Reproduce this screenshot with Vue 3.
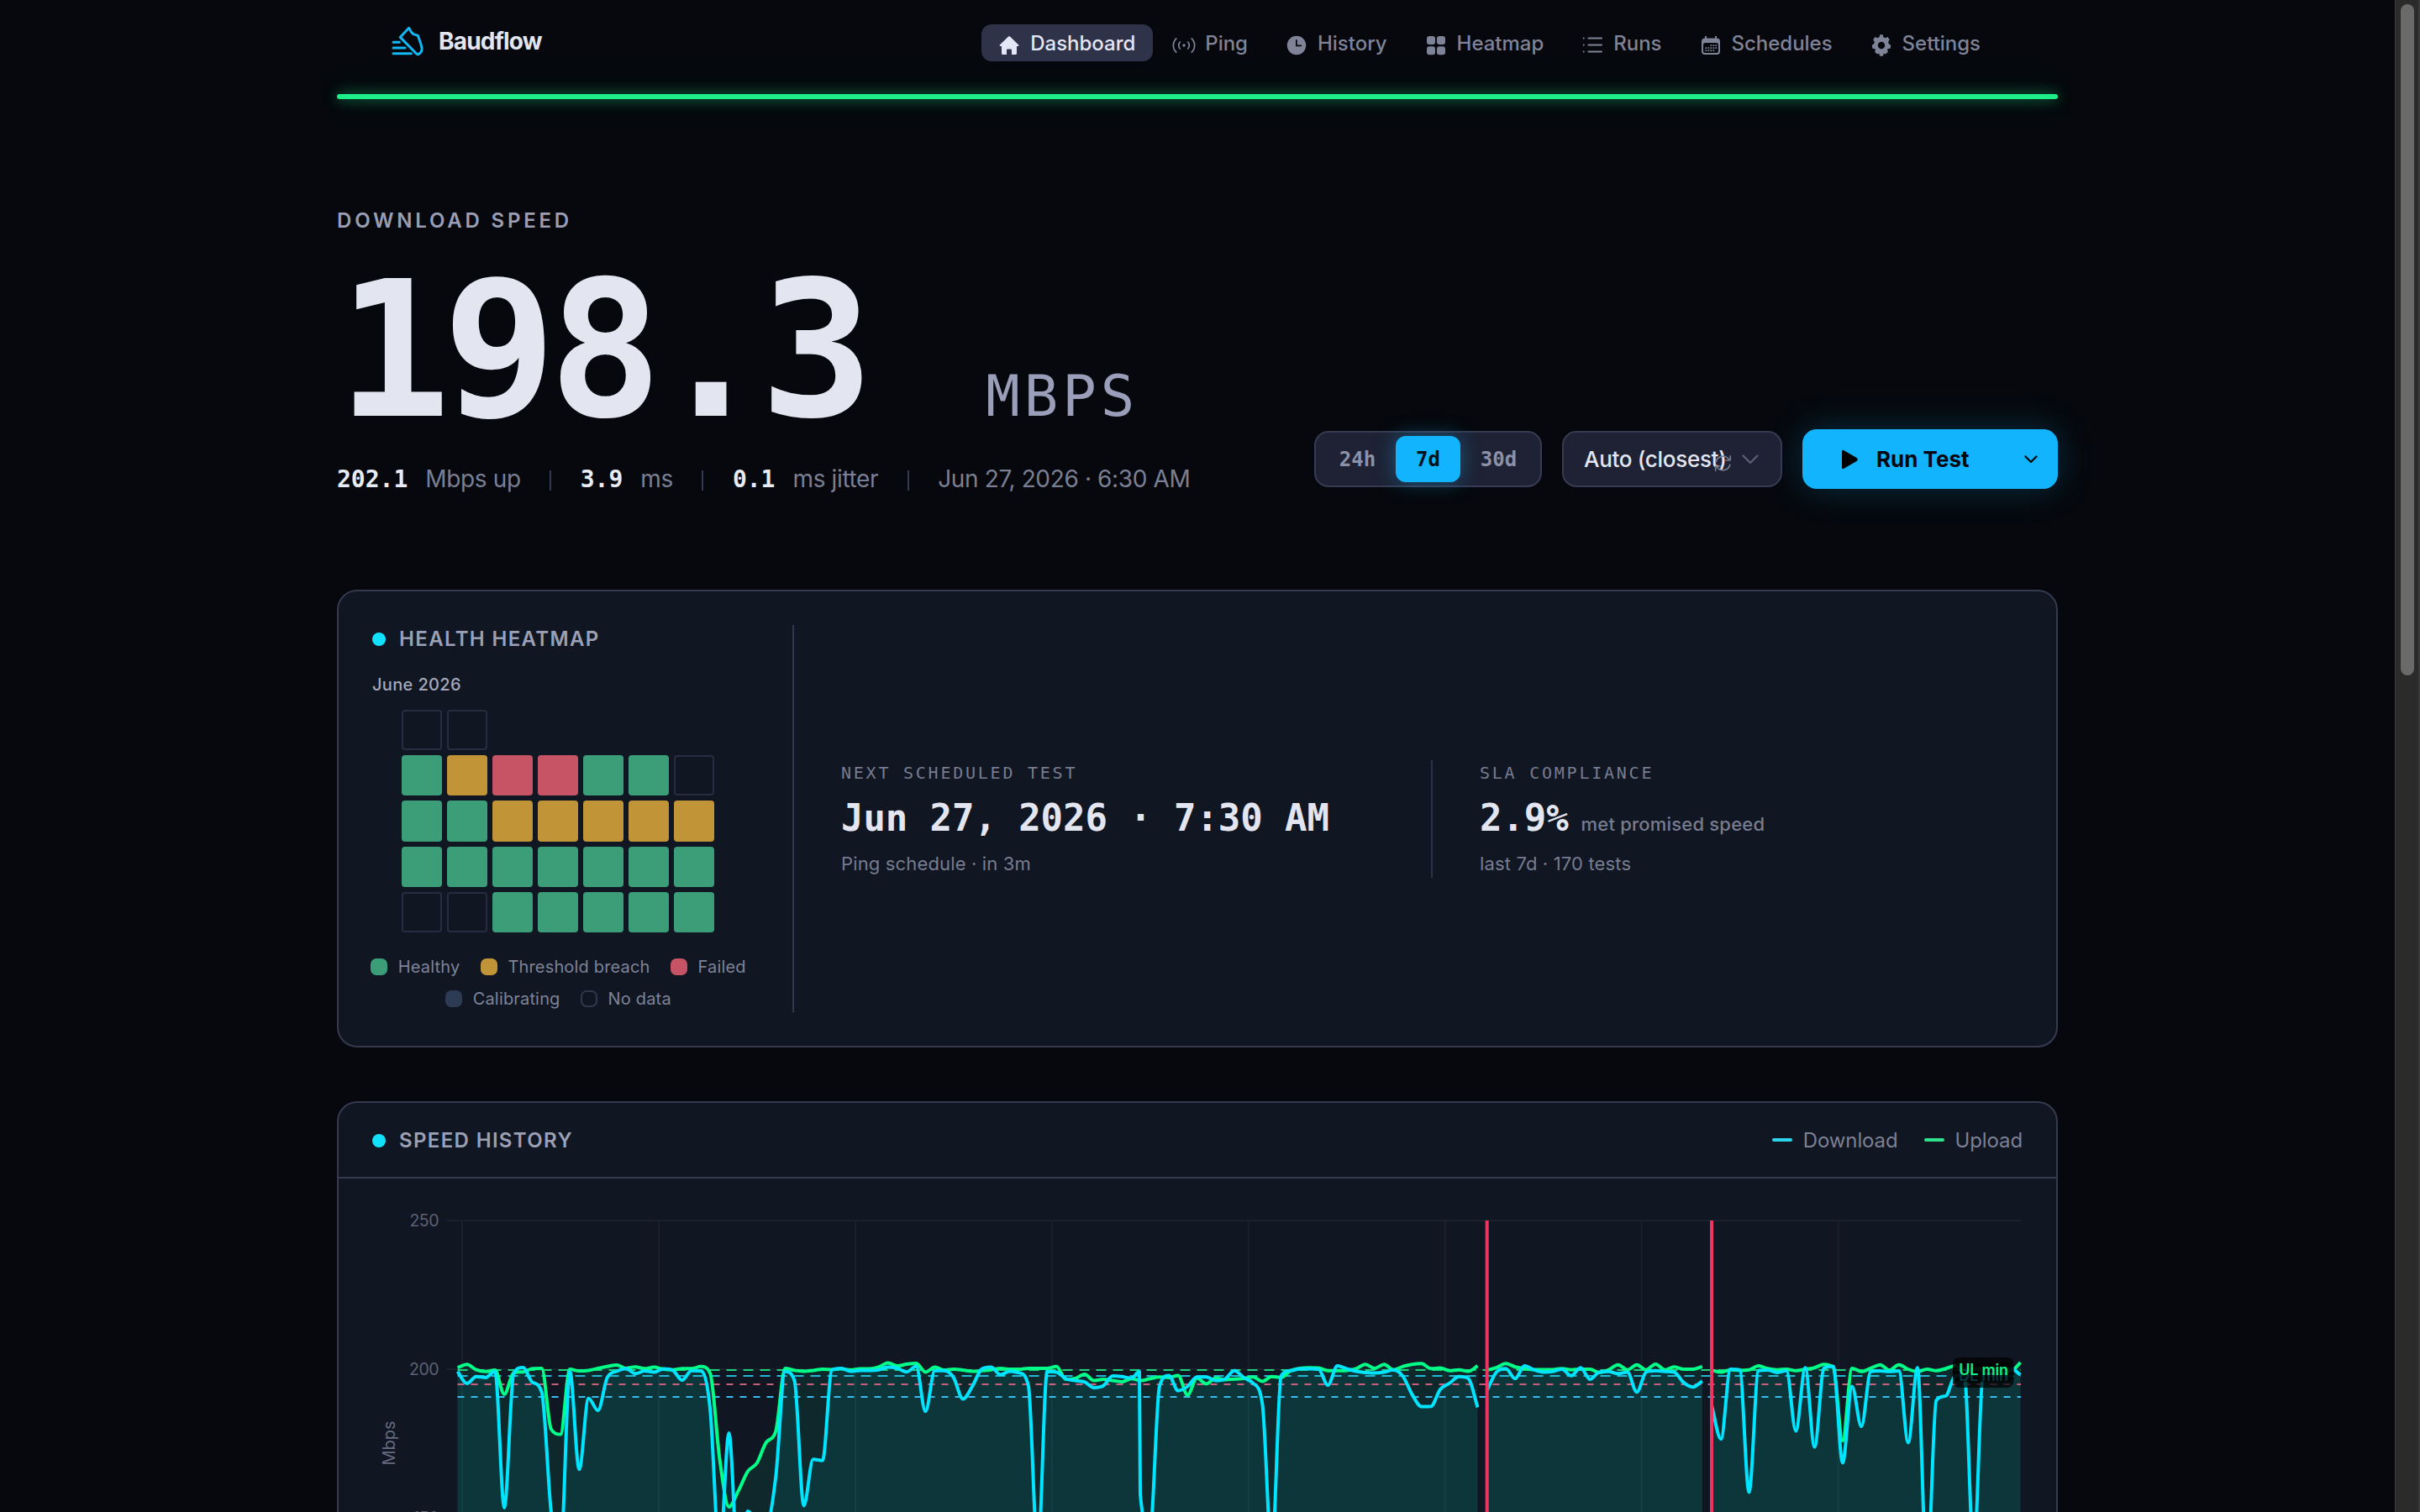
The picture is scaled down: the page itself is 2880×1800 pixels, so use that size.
<script setup>
import { computed } from 'vue'

// Main menu
const menu = [
  { icon: 'home', text: 'Dashboard', active: true },
  { icon: 'ping', text: 'Ping' },
  { icon: 'clock', text: 'History' },
  { icon: 'grid', text: 'Heatmap' },
  { icon: 'list', text: 'Runs' },
  { icon: 'calendar', text: 'Schedules' },
  { icon: 'gear', text: 'Settings' },
]

const ranges = ['24h', '7d', '30d']
const activeRange = '7d'

// Heatmap: n - no data, g - healthy, a - breach, r - failed
const weeks = ['nn', 'garrggn', 'ggaaaaa', 'ggggggg', 'nnggggg']
const legend = [
  [
    { cls: 'g', text: 'Healthy' },
    { cls: 'a', text: 'Threshold breach' },
    { cls: 'r', text: 'Failed' },
  ],
  [
    { cls: 'c', text: 'Calibrating' },
    { cls: 'n', text: 'No data' },
  ],
]

// Speed per hour, split where a test failed. A pair is [hour, Mbps]
const download = [
  {
    start: 0,
    values: [
      199.2, 195.2, 197.5, 197.2, 199.3, 153.4, 198.6, 200.6, 195.6, 192.3, 152, 138, 199.2, 166.3, 190.2, 186.1,
      197.2, 199.3, 200.2, 198.5, 199.4, 199, 200.1, 199.6, 196.3, 199.5, 199.4, 186.3, 137.6, 178.5, 133.5, 152.3,
      149, 148, 163.7, 199.2, 196.2, 154.1, 169.7, 169.3, 199.8, 200.3, 199.3, 199.6, 199.6, 199.8, 200.7, 200.3,
      199.1, 201, 185.8, 199.5, 199.5, 197.2, 190, 194.2, 200, 200.7, 198.2, 199.3, 198.8, 194.4, 138, 199.2, 199,
      196.8, 196.2, 195.7, 193.8, 194.4, 197.7, 197.5, 197, [72.86, 199.2], [72.95, 158], [74, 146], 194.2, 197.9,
      192.8, 194.2, 197.4, 197.4, 196.2, 196.7, 199.5, 197.2, 195.3, 188.2, 138, 197.7, 199.5, 200.1, 200.1, 200,
      194.6, 201.1, 200.2, 199.3, 198.9, 198.7, 199, 199.8, 197.7, 191.5, 187.4, 187.5, 193.2, 195.3, 197.5, 196.9,
      187.2,
    ],
  },
  {
    start: 110,
    values: [
      192.9, 199, 200.2, 196.8, 201.1, 199.8, 199, 199.2, 200, 197.8, 200.5, 196.6, 199, 199.2, 198.5, 199, 192.3,
      199, 199.5, 199.2, 199, 195.5, 194, 196,
    ],
  },
  {
    start: 134,
    values: [
      187.8, 176.5, 200, 199.8, 158.6, 199.5, 199.7, 198.9, 199.5, 179.2, 200.5, 173.8, 200.3, 201, 168.5, 194.2,
      180.7, 199.2, 199.4, 199.2, 199.4, 175.3, 200.5, 130, 189.5, 191, 197.7, 198, 138, 198.6, 200, 199.5, 200.2,
      198.1,
    ],
  },
]

const upload = [
  {
    start: 0,
    values: [
      200.5, 201.6, 199.8, 199.2, 199.7, 191.6, 198.8, 199.1, 200.2, 200.3, 179.8, 178.1, 200, 199.4, 199.6, 200.3,
      200.9, 201.4, 200.3, 200.8, 200.2, 200.7, 200, 199.8, 200.2, 200.2, 200.9, 198.6, 169.9, 153.7, 159, 165.6,
      168.5, 175.5, 179.1, 200.3, 199.6, 199.3, 199.6, 200, 199.9, 200.1, 199.8, 200.1, 200.1, 200.7, 202.1, 201.1,
      201.7, 202, 199, 200.7, 199.7, 200, 199.7, 199.3, 199.5, 199.8, 200.3, 200, 200, 200.3, 200.3, 200.3, 200.9,
      196.6, 196.9, 198.3, 196.2, 196.6, 196.2, 195.8, 196.8, 196.2, 196.8, 197.4, 197.2, 197.9, 191.3, 197, 195.1,
      197, 196.5, 196.7, 196.9, 197.4, 195.9, 197.5, 197.2, 199.5, 200.3, 200.5, 200.4, 199.5, 199.5, 199.6, 200.2,
      201.6, 200.3, 201.6, 199.8, 200.9, 201.6, 201.9, 200.2, 200.4, 199.5, 199.8, 199.3, 201.1,
    ],
  },
  {
    start: 110,
    values: [
      199.7, 200.5, 201.9, 200.8, 200.2, 199.9, 199.9, 199.9, 200.2, 199.8, 200, 200, 198.9, 199.8, 201.5, 199.8,
      201.5, 199.8, 201.7, 199.8, 200.8, 200, 200, 200.9,
    ],
  },
  {
    start: 134,
    values: [
      199.7, 199, 199.8, 199.6, 199.8, 201.1, 200.2, 199.8, 200, 199.5, 200, 200.5, 201.6, 200.5, 176, 200.3, 199.2,
      200.3, 201.5, 199.7, 201.5, 200, 199.2, 200, 199.5, 200.2, 201.1, 200, 200, 200, 200, 200, 199.5, 202.3,
    ],
  },
]

const CHART_W = 2044
const CHART_H = 397
const LEFT = 141.5
const RIGHT = 2002
const STEP = 11.138

const xOf = (h) => LEFT + h * STEP
const yOf = (v) => 227 + (200 - v) * 3.54

const gridX = [0, 1, 2, 3, 4, 5, 6, 7].map((n) => 147 + n * 233.95)
const gridY = [250, 200, 150]
const failures = [110, 134]

function toPoints(part) {
  let hour = part.start - 1
  return part.values.map((e) => {
    if (Array.isArray(e)) {
      hour = e[0]
      return { x: xOf(e[0]), y: yOf(e[1]) }
    }
    hour = Math.floor(hour) + 1
    return { x: xOf(hour), y: yOf(e) }
  })
}

// Monotone cubic curve through the points
function curve(points) {
  const n = points.length
  const slopes = []
  for (let i = 0; i < n - 1; i++) {
    slopes.push((points[i + 1].y - points[i].y) / (points[i + 1].x - points[i].x))
  }
  const t = points.map((_, i) => {
    if (i === 0) return slopes[0]
    if (i === n - 1) return slopes[n - 2]
    return slopes[i - 1] * slopes[i] <= 0 ? 0 : (slopes[i - 1] + slopes[i]) / 2
  })
  for (let i = 0; i < n - 1; i++) {
    if (slopes[i] === 0) {
      t[i] = t[i + 1] = 0
      continue
    }
    const a = t[i] / slopes[i]
    const b = t[i + 1] / slopes[i]
    const len = a * a + b * b
    if (len > 9) {
      t[i] = (3 * a * slopes[i]) / Math.sqrt(len)
      t[i + 1] = (3 * b * slopes[i]) / Math.sqrt(len)
    }
  }
  let d = `M${points[0].x.toFixed(1)} ${points[0].y.toFixed(1)}`
  for (let i = 0; i < n - 1; i++) {
    const p = points[i]
    const q = points[i + 1]
    const s = (q.x - p.x) / 3
    d += `C${[p.x + s, p.y + t[i] * s, q.x - s, q.y - t[i + 1] * s, q.x, q.y].map((v) => v.toFixed(1)).join(' ')}`
  }
  return d
}

function build(series) {
  return series.map((part) => {
    const points = toPoints(part)
    const line = curve(points)
    const first = points[0].x.toFixed(1)
    const last = points[points.length - 1].x.toFixed(1)
    return { line, area: `${line}L${last} 600L${first} 600Z` }
  })
}

const downloadPaths = computed(() => build(download))
const uploadPaths = computed(() => build(upload))
</script>

<template>
  <div class="screen">
    <div class="page">
      <header class="nav">
        <div class="brand">
          <svg class="brand-logo" viewBox="30 30 114 108" fill="none" stroke="#12b8f5" stroke-width="9"
            stroke-linecap="round" stroke-linejoin="round">
            <path d="M92 37L61 70L119 129Q124 133 129 129L135 123Q139 118 138 108L134 92L124 64L108 59L100 51Z" />
            <path d="M36 88H58M36 108H78M36 128H100" />
          </svg>
          <span>Baudflow</span>
        </div>
        <nav class="menu">
          <a v-for="m in menu" :key="m.text" class="menu-item" :class="{ active: m.active }">
            <svg class="menu-icon" viewBox="0 0 24 24" fill="currentColor">
              <template v-if="m.icon === 'home'">
                <path d="M11 1.6a1.5 1.5 0 0 1 2 0l10 9.6a1.1 1.1 0 0 1-.8 1.9H21v8.4a1.5 1.5 0 0 1-1.5 1.5H15v-5.5a1 1 0 0 0-1-1h-4a1 1 0 0 0-1 1V23H4.5A1.5 1.5 0 0 1 3 21.5v-8.4H1.8a1.1 1.1 0 0 1-.8-1.9z" />
              </template>
              <g v-else-if="m.icon === 'ping'" fill="none" stroke="currentColor" stroke-width="1.7" stroke-linecap="round">
                <path d="M2.8 3.8a11.5 11.5 0 0 0 0 16.4M21.2 3.8a11.5 11.5 0 0 1 0 16.4M7.3 8a5.8 5.8 0 0 0 0 8M16.7 8a5.8 5.8 0 0 1 0 8" />
                <circle cx="12" cy="12" r=".8" fill="currentColor" />
              </g>
              <path v-else-if="m.icon === 'clock'" fill-rule="evenodd"
                d="M12 .8a11.2 11.2 0 1 0 0 22.4a11.2 11.2 0 0 0 0-22.4zM11 5.2h1.8v6.3H18v1.8H11z" />
              <g v-else-if="m.icon === 'grid'">
                <rect x="1" y="1" width="10" height="10" rx="3" />
                <rect x="13" y="1" width="10" height="10" rx="3" />
                <rect x="1" y="13.2" width="10" height="10" rx="3" />
                <rect x="13" y="13.2" width="10" height="10" rx="3" />
              </g>
              <g v-else-if="m.icon === 'list'" fill="none" stroke="currentColor" stroke-width="2" stroke-linecap="round">
                <path d="M7.5 3.500H23M7.5 11.500H23M7.5 19.500H23M1.700 3.500h.1M1.700 11.500h.1M1.700 19.500h.1" />
              </g>
              <g v-else-if="m.icon === 'calendar'">
                <path fill-rule="evenodd"
                  d="M5 1h2v2.500h10V1h2v2.500a4 4 0 0 1 4 4V19a4 4 0 0 1-4 4H5a4 4 0 0 1-4-4V7.500a4 4 0 0 1 4-4zM5.500 9A2.500 2.500 0 0 0 3 11.500v7A2.500 2.500 0 0 0 5.500 21h13a2.500 2.500 0 0 0 2.500-2.500v-7A2.500 2.500 0 0 0 18.500 9z" />
                <path d="M11.500 11.200h1.700v1.700h-1.700zM14.500 11.200h1.700v1.700h-1.700zM17.400 11.200h1.700v1.700h-1.700zM5.500 14.200h1.700v1.700H5.500zM8.500 14.200h1.700v1.700H8.500zM11.500 14.200h1.700v1.700h-1.700zM14.500 14.200h1.700v1.700h-1.700zM17.400 14.200h1.700v1.700h-1.700zM5.500 17.200h1.700v1.700H5.500zM8.500 17.200h1.700v1.700H8.500zM11.500 17.200h1.700v1.700h-1.700zM14.500 17.200h1.700v1.700h-1.700z" />
              </g>
              <path v-else fill-rule="evenodd"
                d="M10.200-.8h3.600l.6 3 2.200 1.100 3-1.200 2.200 3.200-1.600 2.500.5 2.300 2.600 1.900-.8 3.700-3 .5-.4.8.7 3-3 2.400-1.800-1-1.200 3.300h-3.600L9 21.400l-1.800 1-3-2.400.7-3-.4-.8-3-.5-.8-3.700 2.600-1.900.5-2.300L2.200 5.300l2.200-3.200 3 1.200 2.200-1.100zM12 7.800a4.200 4.200 0 1 0 0 8.400a4.200 4.200 0 0 0 0-8.400z" />
            </svg>
            <span>{{ m.text }}</span>
          </a>
        </nav>
      </header>
      <div class="status-line"></div>

      <section class="hero">
        <div class="hero-main">
          <div class="hero-label">DOWNLOAD SPEED</div>
          <div class="hero-value">
            <span class="hero-number">198.3</span>
            <span class="hero-unit">MBPS</span>
          </div>
          <div class="stats">
            <b>202.1</b><span>Mbps up</span><i></i>
            <b>3.9</b><span>ms</span><i></i>
            <b>0.1</b><span>ms jitter</span><i></i>
            <span>Jun 27, 2026 · 6:30 AM</span>
          </div>
        </div>

        <div class="controls">
          <div class="segment">
            <button v-for="r in ranges" :key="r" :class="{ active: r === activeRange }">{{ r }}</button>
          </div>
          <div class="select">
            <span>Auto (closest)</span>
            <svg class="select-refresh" viewBox="0 0 24 24" fill="none" stroke="currentColor" stroke-width="1.9"
              stroke-linecap="round" stroke-linejoin="round">
              <path d="M2.5 10A9.8 9.8 0 0 1 20.5 7.5M22 2v6h-6M21.5 14A9.8 9.8 0 0 1 3.5 16.5M2 22v-6h6" />
            </svg>
            <svg class="select-arrow" viewBox="0 0 20 12" fill="none" stroke="currentColor" stroke-width="2.2"
              stroke-linecap="round" stroke-linejoin="round">
              <path d="M1.5 1.5L10 10L18.5 1.5" />
            </svg>
          </div>
          <div class="run">
            <svg class="run-play" viewBox="0 0 20 24">
              <path d="M0 2Q0-.8 2.6.6L18.5 10Q21 12 18.5 14L2.6 23.4Q0 24.8 0 22z" />
            </svg>
            <span>Run Test</span>
            <svg class="run-arrow" viewBox="0 0 16 10" fill="none" stroke="#04070d" stroke-width="2.3"
              stroke-linecap="round" stroke-linejoin="round">
              <path d="M1.5 1.5L8 8L14.5 1.5" />
            </svg>
          </div>
        </div>
      </section>

      <section class="card overview">
        <div class="health">
          <h2 class="title">HEALTH HEATMAP</h2>
          <div class="month">June 2026</div>
          <div class="calendar">
            <div v-for="(w, i) in weeks" :key="i" class="week">
              <div v-for="(d, j) in w" :key="j" class="day" :class="d"></div>
            </div>
          </div>
          <div v-for="(row, i) in legend" :key="i" class="legend">
            <div v-for="l in row" :key="l.text" class="legend-item">
              <span class="swatch" :class="l.cls"></span>{{ l.text }}
            </div>
          </div>
        </div>
        <div class="info">
          <div class="info-block next">
            <div class="info-label">NEXT SCHEDULED TEST</div>
            <div class="info-value">Jun 27, 2026 · 7:30 AM</div>
            <div class="info-note">Ping schedule · in 3m</div>
          </div>
          <div class="info-block sla">
            <div class="info-label">SLA COMPLIANCE</div>
            <div class="info-value">2.9%<small>met promised speed</small></div>
            <div class="info-note">last 7d · 170 tests</div>
          </div>
        </div>
      </section>

      <section class="card history">
        <div class="history-head">
          <h2 class="title">SPEED HISTORY</h2>
          <div class="series">
            <div class="series-item"><span class="dash dl"></span>Download</div>
            <div class="series-item"><span class="dash ul"></span>Upload</div>
          </div>
        </div>
        <svg class="chart" :width="CHART_W" :height="CHART_H" :viewBox="`0 0 ${CHART_W} ${CHART_H}`">
          <g class="grid-lines">
            <line v-for="x in gridX" :key="x" :x1="x" :x2="x" y1="50" :y2="CHART_H" />
            <line v-for="v in gridY" :key="v" x1="128" :x2="RIGHT" :y1="yOf(v)" :y2="yOf(v)" />
          </g>
          <g class="axis">
            <text v-for="v in gridY" :key="v" x="119" :y="yOf(v) + 6.5" text-anchor="end">{{ v }}</text>
            <text class="axis-name" transform="translate(66.5 315) rotate(-90)" text-anchor="middle">Mbps</text>
          </g>

          <path v-for="(p, i) in uploadPaths" :key="'ua' + i" :d="p.area" class="area-ul" />
          <path v-for="(p, i) in downloadPaths" :key="'da' + i" :d="p.area" class="area-dl" />

          <g class="limits">
            <line :x1="LEFT" :x2="RIGHT" y1="228" y2="228" stroke="#1fd07a" stroke-dasharray="12 8" />
            <line :x1="LEFT" :x2="RIGHT" y1="235" y2="235" stroke="#22b8d4" stroke-dasharray="12 8" />
            <line :x1="LEFT" :x2="RIGHT" y1="245" y2="245" stroke="#c9607f" stroke-dasharray="8 8" />
            <line :x1="LEFT" :x2="RIGHT" y1="260" y2="260" stroke="#38bdf0" stroke-dasharray="8 8" />
          </g>

          <path v-for="(p, i) in uploadPaths" :key="'ul' + i" :d="p.line" class="line-ul" />
          <path v-for="(p, i) in downloadPaths" :key="'dl' + i" :d="p.line" class="line-dl" />

          <line v-for="h in failures" :key="h" :x1="xOf(h)" :x2="xOf(h)" y1="50" :y2="CHART_H" class="failure" />

          <g class="tags">
            <rect x="1921" y="220" width="72.5" height="29" rx="8" />
            <text x="1957.5" y="240.5" text-anchor="middle" fill="#1fb4cc">DL min</text>
            <rect x="1921" y="213" width="72.5" height="29" rx="8" />
            <text x="1957.5" y="233.5" text-anchor="middle" fill="#12ef83">UL min</text>
          </g>
        </svg>
      </section>
    </div>
    <div class="scrollbar"><div class="thumb"></div></div>
  </div>
</template>

<style>
html,
body {
  margin: 0;
  background: #06080d;
  overflow: hidden;
}
</style>

<style scoped>
.screen {
  display: flex;
  width: 2880px;
  height: 1800px;
  overflow: hidden;
  background: #06080d;
  color: #e3e6f0;
  font-family: Inter, "Liberation Sans", sans-serif;
}

.page {
  width: 2048px;
  padding: 0 401px;
}

/* Navigation */
.nav {
  display: flex;
  justify-content: space-between;
  height: 112px;
  padding: 0 71px 0 65px;
}

.brand {
  display: flex;
  align-items: center;
  gap: 18px;
  height: 97px;
  font-size: 28px;
  font-weight: 700;
  letter-spacing: -0.8px;
}

.brand-logo {
  width: 38px;
  height: 36px;
}

.menu {
  display: flex;
  gap: 4px;
  margin-top: 29px;
}

.menu-item {
  display: flex;
  align-items: center;
  gap: 13px;
  height: 44px;
  padding: 0 21px;
  border-radius: 12px;
  font-size: 24px;
  font-weight: 500;
  letter-spacing: -0.02px;
  color: #7f8397;
}

.menu-item span {
  margin-top: 1px;
}

.menu-item.active {
  background: #2e3349;
  color: #e3e6f5;
}

.menu-icon {
  width: 24px;
  height: 24px;
  margin-top: 6px;
  overflow: visible;
}

.status-line {
  height: 6px;
  border-radius: 3px;
  background: #1df08a;
  box-shadow: 0 0 16px rgba(29, 240, 138, 0.6), 0 0 44px rgba(29, 240, 138, 0.16);
}

/* Hero */
.hero {
  display: flex;
  justify-content: space-between;
  align-items: flex-end;
  height: 471px;
}

.hero-label {
  font-size: 24px;
  line-height: 30px;
  font-weight: 600;
  letter-spacing: 3.8px;
  color: #9a9eb5;
}

.hero-value {
  display: flex;
  align-items: baseline;
  height: 224px;
  margin-top: 27px;
  font-family: "DejaVu Sans Mono", "Liberation Mono", monospace;
}

.hero-number {
  font-size: 225px;
  line-height: 224px;
  font-weight: 700;
  letter-spacing: -9.6px;
}

.hero-unit {
  margin-left: 143px;
  font-size: 67.2px;
  line-height: 68px;
  letter-spacing: 5px;
  color: #9a9eb8;
}

.stats {
  display: flex;
  align-items: baseline;
  margin-top: 21px;
  height: 39px;
  font-size: 28px;
  line-height: 40px;
  letter-spacing: -0.36px;
  color: #7b7f93;
}

.stats b {
  margin-right: 21px;
  font-family: "DejaVu Sans Mono", "Liberation Mono", monospace;
  font-weight: 700;
  letter-spacing: 0;
  color: #e8ebf3;
}

.stats i {
  align-self: center;
  width: 2px;
  height: 24px;
  margin: 4px 34.5px 0;
  background: #343950;
}

.controls {
  display: flex;
  align-items: center;
  gap: 24px;
  margin-bottom: 7px;
}

.segment {
  display: flex;
  box-sizing: border-box;
  width: 271px;
  height: 67px;
  padding: 4px;
  border: 2px solid #363b52;
  border-radius: 17px;
  background: #1e2234;
}

.segment button {
  flex: 1;
  padding: 0;
  border: 0;
  border-radius: 12px;
  background: none;
  color: #8d91a8;
  font-family: "DejaVu Sans Mono", "Liberation Mono", monospace;
  font-size: 24px;
  font-weight: 700;
}

.segment button.active {
  flex: 0 0 77px;
  background: #12b4fd;
  color: #05101a;
  box-shadow: 0 0 24px rgba(18, 180, 253, 0.35);
}

.select {
  position: relative;
  display: flex;
  align-items: center;
  box-sizing: border-box;
  width: 262px;
  height: 67px;
  padding: 0 24px;
  border: 2px solid #363b52;
  border-radius: 17px;
  background: #1e2234;
  font-size: 26px;
  font-weight: 500;
  letter-spacing: -0.3px;
  white-space: nowrap;
}

.select-refresh {
  position: absolute;
  left: 179px;
  top: 26px;
  width: 21px;
  height: 21px;
  color: #767b90;
}

.select-arrow {
  position: absolute;
  right: 26px;
  top: 26px;
  width: 20px;
  height: 12px;
  color: #5b6076;
}

.run {
  display: flex;
  align-items: center;
  box-sizing: border-box;
  width: 304px;
  height: 71px;
  padding: 0 24px 0 47px;
  border-radius: 17px;
  background: #12b4fd;
  color: #04070d;
  font-size: 26px;
  font-weight: 700;
  box-shadow: 0 0 40px rgba(18, 180, 253, 0.22);
}

.run-play {
  width: 19px;
  height: 24px;
  margin-right: 22px;
}

.run-arrow {
  width: 16px;
  height: 10px;
  margin-left: auto;
}

/* Cards */
.card {
  box-sizing: border-box;
  border: 2px solid #353a4f;
  border-radius: 24px;
  background: #111623;
}

.title {
  display: flex;
  align-items: center;
  gap: 16px;
  margin: 0;
  font-size: 24px;
  line-height: 32px;
  font-weight: 600;
  letter-spacing: 1.35px;
  color: #9ba0b5;
}

.title::before {
  content: "";
  width: 16px;
  height: 16px;
  border-radius: 50%;
  background: #12e1fb;
}

.overview {
  display: flex;
  margin-top: 113px;
  height: 545px;
  padding: 40px;
}

.overview .title {
  margin-top: 1px;
}

.health {
  width: 443px;
  padding-right: 57px;
  border-right: 2px solid #31364a;
}

.month {
  margin-top: 25px;
  font-size: 20px;
  line-height: 26px;
  font-weight: 500;
  letter-spacing: 0.35px;
  color: #a3a8ba;
}

.calendar {
  display: grid;
  gap: 6px;
  margin: 17px 0 0 35px;
}

.week {
  display: flex;
  gap: 6px;
}

.day {
  box-sizing: border-box;
  width: 48px;
  height: 48.2px;
  border-radius: 4px;
}

.day.n {
  border: 2px solid #282c42;
}

.g {
  background: #3b9e79;
}

.a {
  background: #c19437;
}

.r {
  background: #c75464;
}

.swatch.c {
  background: #2c3a54;
}

.swatch.n {
  border: 2px solid #31364a;
}

.legend {
  display: flex;
  justify-content: center;
  gap: 24.5px;
  margin-top: 12px;
  font-size: 20px;
  line-height: 26px;
  letter-spacing: 0.17px;
  color: #7e8397;
}

.calendar + .legend {
  margin-top: 28px;
}

.legend-item {
  display: flex;
  align-items: center;
  gap: 12.5px;
  white-space: nowrap;
}

.swatch {
  box-sizing: border-box;
  width: 20px;
  height: 20px;
  border-radius: 7px;
}

.info {
  flex: 1;
  display: flex;
  align-items: center;
}

.info-block {
  height: 140px;
}

.next {
  width: 702px;
  padding-left: 56px;
  border-right: 2px solid #2b3044;
}

.sla {
  padding-left: 56px;
}

.info-label {
  margin-top: 2px;
  font-family: "DejaVu Sans Mono", "Liberation Mono", monospace;
  font-size: 20px;
  line-height: 26px;
  letter-spacing: 2.76px;
  color: #777c8f;
}

.info-value {
  height: 54px;
  margin-top: 14px;
  font-family: "DejaVu Sans Mono", "Liberation Mono", monospace;
  font-size: 44px;
  line-height: 54px;
  font-weight: 700;
  letter-spacing: -0.09px;
}

.info-value small {
  margin-left: 15px;
  font-family: Inter, "Liberation Sans", sans-serif;
  font-size: 22px;
  line-height: 22px;
  font-weight: 500;
  letter-spacing: 0.2px;
  color: #777c8f;
}

.info-note {
  margin-top: 13px;
  font-size: 22px;
  line-height: 28px;
  letter-spacing: 0.15px;
  color: #777c8f;
}

/* Speed history */
.history {
  margin-top: 64px;
  height: 520px;
  overflow: hidden;
}

.history-head {
  display: flex;
  justify-content: space-between;
  align-items: center;
  height: 88px;
  padding: 0 40px;
  border-bottom: 2px solid #353a4f;
}

.history-head .title {
  padding-top: 1px;
}

.series {
  display: flex;
  gap: 31px;
  font-size: 24px;
  letter-spacing: -0.12px;
  color: #7b8094;
}

.series-item {
  display: flex;
  align-items: center;
  gap: 13px;
}

.dash {
  width: 24px;
  height: 4px;
  border-radius: 2px;
}

.dash.dl {
  background: #2bd4ec;
}

.dash.ul {
  background: #2fe08c;
}

.chart {
  display: block;
}

.grid-lines line {
  stroke: #1b202d;
  stroke-width: 2;
}

.axis text {
  fill: #5d6275;
  font-size: 19.5px;
  letter-spacing: -0.5px;
}

.axis .axis-name {
  fill: #666b7f;
  font-size: 20px;
  letter-spacing: 0;
}

.area-ul {
  fill: rgba(0, 255, 136, 0.08);
}

.area-dl {
  fill: rgba(0, 229, 255, 0.08);
}

.limits line {
  stroke-width: 2;
}

.line-ul,
.line-dl {
  fill: none;
  stroke-width: 4;
  stroke-linejoin: round;
}

.line-ul {
  stroke: #00ff88;
}

.line-dl {
  stroke: #00e5ff;
}

.failure {
  stroke: #ee3462;
  stroke-width: 4;
}

.tags rect {
  fill: rgba(0, 0, 0, 0.7);
}

.tags text {
  font-size: 18px;
  font-weight: 600;
  letter-spacing: -0.2px;
}

/* Page scrollbar */
.scrollbar {
  box-sizing: border-box;
  width: 30px;
  height: 1800px;
  padding: 5px 5px 0 6px;
  border-left: 1px solid #3b3b3b;
  border-right: 2px solid #3b3b3b;
  background: #2b2b2b;
}

.thumb {
  height: 799px;
  border-radius: 9px;
  background: #6a6a6a;
}
</style>
